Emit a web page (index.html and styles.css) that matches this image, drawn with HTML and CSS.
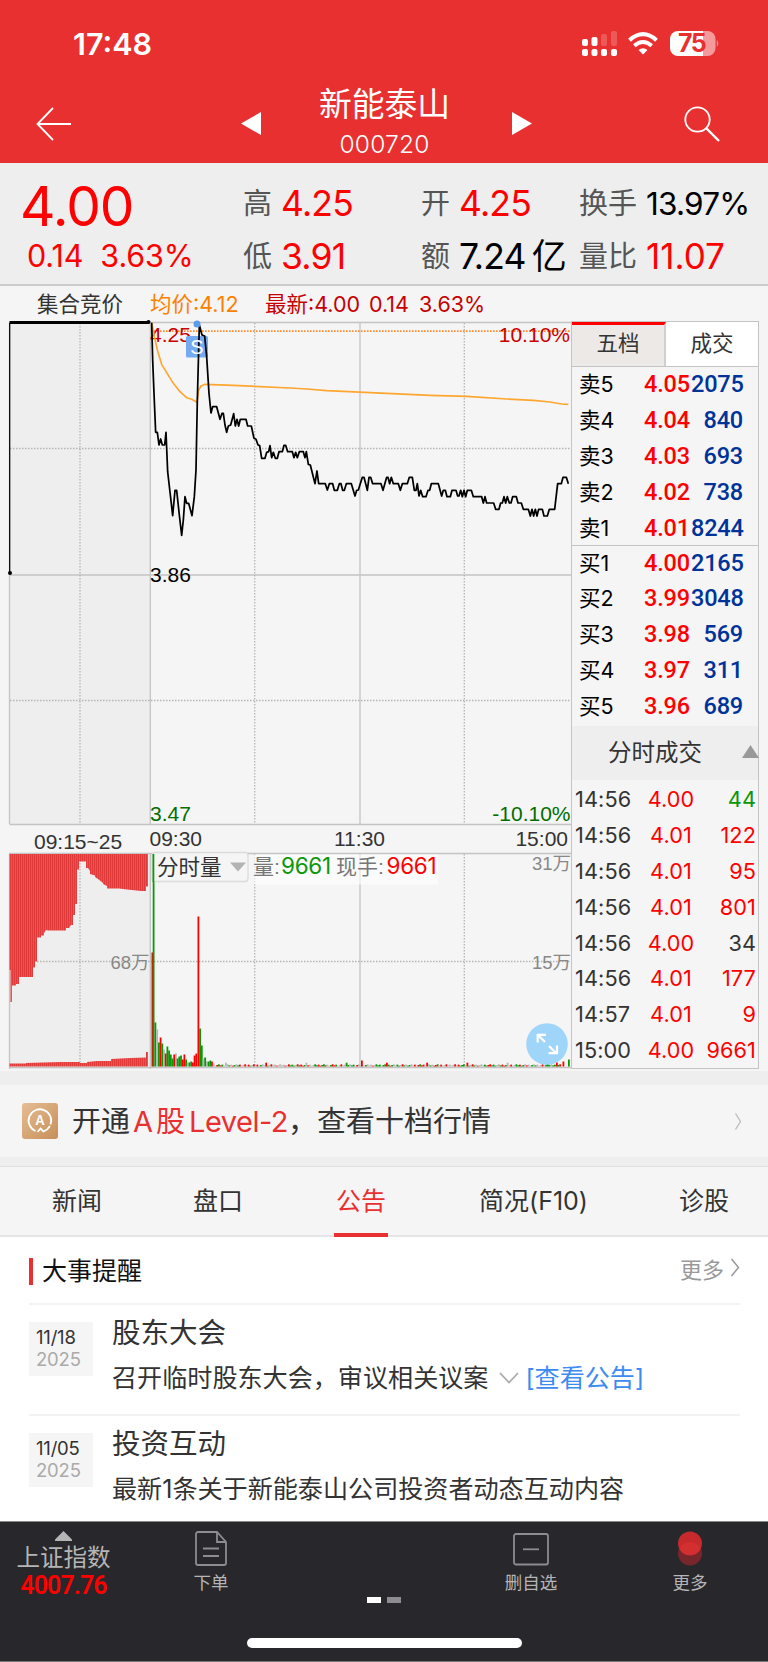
FILE: index.html
```html
<!DOCTYPE html>
<html lang="zh-CN">
<head>
    <meta charset="UTF-8">
    <meta name="viewport" content="width=device-width, initial-scale=1.0">
    <title>新能泰山 000720</title>
    <link rel="stylesheet" href="styles.css">
</head>
<body>

<header>
    <div class="status-bar">
        <span class="clock">17:48</span>
        <svg class="status-icons" width="138" height="40" viewBox="0 -6 138 40">
            <g fill="#fff">
                <rect x="2" y="19" width="6" height="7" rx="2"/>
                <rect x="11.500" y="19" width="6" height="7" rx="2"/>
                <rect x="21" y="19" width="6" height="7" rx="2"/>
                <rect x="31" y="19" width="6" height="7" rx="2"/>
                <rect x="2" y="9" width="6" height="7" rx="2"/>
                <rect x="11.500" y="7" width="6" height="9" rx="2"/>
                <rect x="21" y="4" width="6" height="12" rx="2" opacity=".2"/>
                <rect x="31" y="1" width="6" height="15" rx="2" opacity=".2"/>
                <path d="M63 24.500l-4.500-4.500q4.500-3.500 9 0z"/>
            </g>
            <path d="M49.500 10.200q13.500-12 27 0M54.300 15.700q8.700-7.400 17.400 0" fill="none" stroke="#fff" stroke-width="4"/>
            <path d="M98 1h6v25h-6a8 8 0 0 1-8-8V9a8 8 0 0 1 8-8z" fill="#fff"/>
            <rect x="103" y="1" width="20.500" height="25" fill="#fff"/>
            <path d="M123.500 1h4a8 8 0 0 1 8 8v9a8 8 0 0 1-8 8h-4z" fill="#f59a9a"/>
            <path d="M136.800 10q3 3.500 0 7z" fill="#f59a9a"/>
            <text class="battery" x="98" y="22">75</text>
        </svg>
    </div>
    <div class="title-bar">
        <svg class="back" width="36" height="34" viewBox="0 0 36 34"><path d="M17 1L1.500 17 17 33M1.500 17H35" fill="none" stroke="#fff" stroke-width="1.800"/></svg>
        <svg class="prev" width="20" height="23" viewBox="0 0 20 23"><path d="M0 11.500L20 0v23z" fill="#fff"/></svg>
        <div class="stock-name">
            <h1>新能泰山</h1>
            <p>000720</p>
        </div>
        <svg class="next" width="20" height="23" viewBox="0 0 20 23"><path d="M20 11.500L0 0v23z" fill="#fff"/></svg>
        <svg class="search" width="36" height="36" viewBox="0 0 36 36"><circle cx="13.500" cy="13.500" r="12.200" fill="none" stroke="#fff" stroke-width="1.800"/><path d="M22 22l13 13" stroke="#fff" stroke-width="2.400"/></svg>
    </div>
</header>

<section class="quote">
    <div class="price-now">
        <div class="price">4.00</div>
        <div class="change"><span>0.14</span><span>3.63%</span></div>
    </div>
    <dl class="high-low">
        <dt>高</dt><dd class="up">4.25</dd>
        <dt>低</dt><dd class="up">3.91</dd>
    </dl>
    <dl class="open-amount">
        <dt>开</dt><dd class="up">4.25</dd>
        <dt>额</dt><dd>7.24<i>亿</i></dd>
    </dl>
    <dl class="turnover">
        <dt>换手</dt><dd class="small">13.97%</dd>
        <dt>量比</dt><dd class="up mid">11.07</dd>
    </dl>
</section>

<div class="legend">
    <span class="auction">集合竞价</span>
    <span class="avg">均价:4.12</span>
    <span class="last">最新:4.00</span>
    <span class="last diff">0.14</span>
    <span class="last">3.63%</span>
</div>

<section class="market">
    <svg class="chart" id="chart" width="571" height="748" viewBox="0 321 571 748">
        <defs>
            <pattern id="stripes" width="2" height="10" patternUnits="userSpaceOnUse">
                <rect width="2" height="10" fill="#f25050"/>
                <rect width="1" height="10" fill="#e03a3a"/>
            </pattern>
        </defs>
        <!-- 集合竞价背景 -->
        <rect x="9.500" y="322.500" width="140.500" height="501.500" fill="#eee"/>
        <rect x="9.500" y="853.500" width="140.500" height="215" fill="#eee"/>
        <!-- 网格 -->
        <g class="grid">
            <path d="M9.500 322.500H571M9.500 575H571M9.500 824.500H571M9.500 853.500H571M9.500 1067.500H571"/>
            <path d="M9.500 322V824M150.300 322V824M360 322V824M9.500 853V1069M150.300 853V1069M360 853V1067"/>
        </g>
        <g class="dotted">
            <path d="M10 448.500H571M10 700.500H571M10 961.500H571"/>
            <path d="M80 323V824M254.700 323V824M464.300 323V824M80 854V1067M254.700 854V1067M464.300 854V1067"/>
        </g>
        <path class="limit" d="M151 331.200H571"/>
        <text x="150" y="342" class="red">4.25</text>
        <text x="570" y="342" class="red" text-anchor="end">10.10%</text>

        <path d="M9.500 322.500H148.500" stroke="#000" stroke-width="3"/>
        <path d="M9.700 323V573" stroke="#000" stroke-width="1.200"/>
        <circle cx="148.500" cy="322" r="2"/>
        <circle cx="10" cy="573" r="2"/>

        <rect x="186" y="336" width="22" height="21.500" rx="1.500" fill="#74abf0"/>
        <!-- 均价线和分时线 -->
        <g transform="translate(0 310) scale(.33333)" fill="none" stroke-linejoin="round">
            <path d="M455 38L463 80 472 120 485 163 500 188 520 220 540 245 560 263 575 268 591 277 596 240 603 228 615 223 700 226 870 234 920 237 980 242 1160 250 1290 256 1400 259 1520 267 1600 271 1650 276 1685 282 1705 283" stroke="#ffa630" stroke-width="5"/>
            <path d="M455 38L458 150 462 250 467 367H472L477 405 482 387 487 405H494L498 367 503 485 511 555 518 617 525 541H530L538 615 545 676 550 630 555 560 560 580H566L576 617 583 560 588 480 592 270 598 45 606 75 614 78 620 140 627 250 633 309 638 290H650L660 328 666 310H670L675 345 680 367 685 348 692 345 701 311 706 348 711 328 716 348 721 328H738L743 348H754L762 385 768 388 774 405 779 407 785 445H795L800 427 806 425 810 407 815 443 820 427 826 445H832L837 425H847L852 406H857L863 425H877L882 443 887 427 892 443 898 425H910L915 443 919 425 925 463 931 465 945 521 951 483 956 521H976L982 540 988 521H998L1003 541H1012L1018 521H1023L1028 541H1033L1039 521H1054L1065 558 1070 541 1075 540 1087 502H1092L1102 541 1107 502H1112L1118 521H1143L1149 541 1160 502H1164L1169 521 1174 502 1180 521H1195L1201 541 1207 521H1222L1228 502H1237L1243 541H1248L1252 521 1257 558 1262 541 1268 560H1278L1284 541H1289L1294 521H1315L1325 558 1330 541H1336L1341 560H1351L1356 541H1368L1373 558H1377L1382 541 1387 560 1392 541 1397 560 1402 541H1414L1420 560H1445L1450 579 1455 560 1460 579H1481L1487 598H1497L1502 579H1507L1512 560 1517 579 1522 560 1528 579H1533L1538 560H1549L1554 579H1564L1570 598H1585L1591 618 1596 598 1601 618 1606 598 1611 618 1616 598H1627L1632 618H1642L1648 598H1664L1673 521H1684L1689 502H1699L1705 521" stroke="#000" stroke-width="5.200"/>
        </g>
        <circle cx="197" cy="324" r="3.500" fill="#5a9bea"/>
        <text x="197" y="353.500" class="mark" text-anchor="middle">S</text>

        <text x="150" y="581.500">3.86</text>
        <text x="150" y="821" class="green">3.47</text>
        <text x="570.500" y="821" class="green" text-anchor="end">-10.10%</text>
        <text x="34" y="848.500" class="time">09:15~25</text>
        <text x="149.500" y="846" class="time">09:30</text>
        <text x="359.500" y="846" class="time" text-anchor="middle">11:30</text>
        <text x="568" y="846" class="time" text-anchor="end">15:00</text>

        <!-- 竞价量 -->
        <path fill="url(#stripes)" d="M9.500 854H148V886.500H146V891H141L127 889.500 119 888.500H107V886L103 884V883L98 879 95 877V875.500L90 874V871L88 868H86V861.500H79V869.500H77V904H75V915H73V925H71L69 928H66V930.500H48L46 930 44 933V935.500H41V937.500H37V961.500H35V967.500H33V977H19V984H16V985.500H12V1002H10.500V970H9.500z"/>
        <path fill="url(#stripes)" d="M9.500 1066.500V1063.500H26V1063L60 1062H80V1063H87V1062L97 1061H111V1059L130 1058 146 1057.500V1052H148V1066.500z"/>
        <g id="volume"></g>

        <text x="571" y="870" class="unit" text-anchor="end">31万</text>
        <text x="149.500" y="969" class="unit" text-anchor="end">68万</text>
        <text x="571" y="969" class="unit" text-anchor="end">15万</text>

        <rect x="152" y="852.500" width="96" height="29" rx="3" fill="#f5f5f5" stroke="#dcdcdc" stroke-width="1.300"/>
        <rect x="152.500" y="854" width="1.800" height="28" fill="#0a970a"/>
        <text x="157" y="875" class="index">分时量</text>
        <path d="M230 862.500h16l-8 9z" fill="#b3b3b3"/>
        <rect x="254" y="854.500" width="184" height="30" fill="#fff" opacity=".6"/>
        <text x="253" y="873.500" class="label">量:</text>
        <text x="281" y="873.500" class="num" fill="#0a970a">9661</text>
        <text x="336" y="873.500" class="label">现手:</text>
        <text x="386.500" y="873.500" class="num" fill="#f00">9661</text>

        <circle cx="547" cy="1044" r="20.800" fill="#a0d5fa"/>
        <path d="M545 1042l-7-7M537.700 1042.500V1034.800H546M549 1046l7 7M557 1045.500V1053.200H548.500" fill="none" stroke="#fff" stroke-width="2.200"/>
    </svg>

    <aside class="book">
        <div class="book-tabs">
            <span class="active">五档</span>
            <span>成交</span>
        </div>
        <ul class="orders sell">
            <li><span>卖5</span><b>4.05</b><em>2075</em></li>
            <li><span>卖4</span><b>4.04</b><em>840</em></li>
            <li><span>卖3</span><b>4.03</b><em>693</em></li>
            <li><span>卖2</span><b>4.02</b><em>738</em></li>
            <li><span>卖1</span><b>4.01</b><em>8244</em></li>
        </ul>
        <ul class="orders">
            <li><span>买1</span><b>4.00</b><em>2165</em></li>
            <li><span>买2</span><b>3.99</b><em>3048</em></li>
            <li><span>买3</span><b>3.98</b><em>569</em></li>
            <li><span>买4</span><b>3.97</b><em>311</em></li>
            <li><span>买5</span><b>3.96</b><em>689</em></li>
        </ul>
        <div class="trades-title">
            <span>分时成交</span>
            <svg width="17" height="13" viewBox="0 0 17 13"><path d="M0 13L8.500 0 17 13z" fill="#999"/></svg>
        </div>
        <ul class="trades">
            <li><span>14:56</span><b>4.00</b><em class="down">44</em></li>
            <li><span>14:56</span><b>4.01</b><em>122</em></li>
            <li><span>14:56</span><b>4.01</b><em>95</em></li>
            <li><span>14:56</span><b>4.01</b><em>801</em></li>
            <li><span>14:56</span><b>4.00</b><em class="flat">34</em></li>
            <li><span>14:56</span><b>4.01</b><em>177</em></li>
            <li><span>14:57</span><b>4.01</b><em>9</em></li>
            <li><span>15:00</span><b>4.00</b><em>9661</em></li>
        </ul>
    </aside>
</section>

<a class="level2">
    <svg width="36" height="36" viewBox="0 0 36 36">
        <defs><linearGradient id="gold" x1="0" y1="0" x2="1" y2="1"><stop offset="0" stop-color="#e6bd93"/><stop offset="1" stop-color="#c68f59"/></linearGradient></defs>
        <rect width="36" height="36" rx="3" fill="url(#gold)"/>
        <path d="M13.500 28A11.300 11.300 0 1 1 28.500 21.500M28 23q-2.500 4-6.500 5.500l-3-3-3 3.500" fill="none" stroke="#fff" stroke-width="1.800"/>
        <text x="18" y="22" text-anchor="middle">A</text>
    </svg>
    <p>开通<strong class="a">A</strong><strong>股</strong><strong class="lv">Level-2</strong>，查看十档行情</p>
    <svg class="arrow" width="8" height="17" viewBox="0 0 8 17"><path d="M1.500 .5l5 8-5 8" fill="none" stroke="#bbb" stroke-width="1.300"/></svg>
</a>

<nav class="tabs">
    <a>新闻</a>
    <a>盘口</a>
    <a class="active">公告</a>
    <a>简况(F10)</a>
    <a>诊股</a>
</nav>

<section class="events">
    <div class="events-head">
        <h2>大事提醒</h2>
        <a class="more">更多<svg width="10" height="19" viewBox="0 0 10 19"><path d="M1.500 1l7 8.500-7 8.500" fill="none" stroke="#999" stroke-width="1.500"/></svg></a>
    </div>
    <article class="event">
        <div class="date">11/18<span>2025</span></div>
        <div class="event-text">
            <h3>股东大会</h3>
            <p>召开临时股东大会，审议相关议案<svg width="20" height="12" viewBox="0 0 20 12"><path d="M1 1l9 9.500L19 1" fill="none" stroke="#aaa" stroke-width="1.800"/></svg><a>[查看公告]</a></p>
        </div>
    </article>
    <article class="event">
        <div class="date">11/05<span>2025</span></div>
        <div class="event-text">
            <h3>投资互动</h3>
            <p>最新1条关于新能泰山公司投资者动态互动内容</p>
        </div>
    </article>
</section>

<footer>
    <div class="toolbar">
        <div class="index-box">
            <svg width="17" height="10" viewBox="0 0 17 10"><path d="M8.500 0L17 8.500V10H0V8.500z" fill="#b5b5b5"/></svg>
            <span>上证指数</span>
            <b>4007.76</b>
        </div>
        <div class="tool order">
            <svg width="32" height="35" viewBox="0 0 32 35"><path d="M22 1H3a2 2 0 0 0-2 2v29a2 2 0 0 0 2 2h26a2 2 0 0 0 2-2V11zM22 1v10h9M8 17.500h16M8 25h16" fill="none" stroke="#8d8d90" stroke-width="1.800"/></svg>
            下单
        </div>
        <div class="tool remove">
            <svg width="36" height="35" viewBox="0 0 36 35"><rect x="1" y="3" width="34" height="30.500" rx="2" fill="none" stroke="#8d8d90" stroke-width="1.800"/><path d="M10 18.300h16" stroke="#8d8d90" stroke-width="1.800"/></svg>
            删自选
        </div>
        <div class="tool more-tool">
            <svg width="26" height="35" viewBox="0 0 26 35"><circle cx="13" cy="22.500" r="12" fill="#77262b"/><circle cx="13" cy="12.500" r="12" fill="#c62a2d"/><path d="M2.300 17.500a12 12 0 0 1 21.400 0A12 12 0 0 1 2.300 17.500z" fill="#d32e30"/></svg>
            更多
        </div>
    </div>
    <div class="pager"><i class="on"></i><i></i></div>
    <div class="home-bar"></div>
</footer>

<script>
    // 成交量柱: [x, 高度, 颜色]
    const colors = { r: '#f00', g: '#0a970a', w: '#b5b5b5' };
    const bars = [
        [151.5, 114, 'r'], [152.700, 212, 'g'], [154.500, 44, 'g'], [156.300, 37, 'w'], [158, 24, 'g'],
        [159.700, 29, 'r'], [161.400, 23, 'g'], [163.100, 17, 'w'], [164.800, 13, 'r'], [166.500, 20, 'g'],
        [168.200, 16, 'g'], [169.900, 12, 'g'], [171.600, 8, 'g'], [173.300, 12, 'r'], [175, 13, 'w'],
        [176.700, 8, 'g'], [178.400, 10, 'g'], [180.100, 11, 'g'], [181.800, 7, 'r'], [183.500, 12, 'r'],
        [185.200, 7, 'g'], [186.900, 4, 'w'], [188.600, 4, 'g'], [190.300, 5, 'g'], [192, 4, 'r'],
        [193.700, 11, 'r'], [195.400, 13, 'r'], [197.500, 150, 'r'], [199.200, 38, 'g'], [200.900, 21, 'g'],
        [202.600, 8, 'w'], [204.300, 9, 'g'], [206, 5, 'w'], [207.700, 5, 'g'], [209.400, 6, 'g'],
        [211.100, 5, 'r'], [212.800, 3, 'w']
    ];
    const tail = 'wwggrwrggrrwrwgrgrgwwwgwwgwggwrrwrgrwgwgwwrwrgwrwgwwwgrwgw';
    for (let i = 0; i < 198; i++) {
        let h = 0.8 + (i * 7 % 5) * 0.35;
        if (i % 23 === 6) h = 3.8;
        bars.push([214.500 + i * 1.750, h, tail[(i * 3 + i % 7) % tail.length]]);
    }
    bars.push([361, 6, 'r'], [556, 4, 'r'], [562.500, 5, 'r'], [568, 7, 'g']);

    const group = document.getElementById('volume');
    bars.forEach(([x, h, c]) => {
        const rect = document.createElementNS('http://www.w3.org/2000/svg', 'rect');
        rect.setAttribute('x', x);
        rect.setAttribute('y', 1066.5 - h);
        rect.setAttribute('width', 1.8);
        rect.setAttribute('height', h);
        rect.setAttribute('fill', colors[c]);
        group.appendChild(rect);
    });
</script>
</body>
</html>
```
FILE: styles.css
```css
* {
    box-sizing: border-box;
    margin: 0;
    padding: 0;
}
body {
    width: 768px;
    height: 1662px;
    overflow: hidden;
    font-family: Inter, "Noto Sans CJK SC", sans-serif;
    background-color: #eee;
    color: #333;
}
ul {
    list-style: none;
}
i, em {
    font-style: normal;
}
svg {
    display: block;
    flex: none;
    overflow: visible;
}
header {
    height: 163px;
    background-color: #e93030;
    color: #fff;
}
.status-bar {
    display: flex;
    justify-content: space-between;
    height: 86px;
    padding: 24px 50px 0 73px;
}
.clock {
    font-size: 30.5px;
    font-weight: 600;
    line-height: 40px;
}
.battery {
    font-size: 25px;
    font-weight: 700;
    letter-spacing: -1.5px;
    fill: #e93030;
}
.title-bar {
    display: flex;
    align-items: flex-start;
    height: 77px;
    padding: 0 48px 0 36px;
}
.back {
    margin-top: 21px;
}
.prev {
    margin: 26px 0 0 169px;
}
.stock-name {
    width: 247px;
    margin: -1px 4px 0 0;
    text-align: center;
}
.stock-name h1 {
    font-size: 32.8px;
    font-weight: 400;
    line-height: 38px;
}
.stock-name p {
    font-size: 24.5px;
    font-weight: 300;
    line-height: 30px;
    margin-top: 6px;
    letter-spacing: 0.2px;
}
.next {
    margin-top: 26px;
}
.search {
    margin: 20px 0 0 auto;
}
.quote {
    display: flex;
    height: 123px;
    background-color: #eee;
    border-bottom: 2px solid #ccc;
}
.price-now {
    width: 243px;
    color: #f00;
}
.price {
    font-size: 55px;
    line-height: 60px;
    margin: 13px 0 0 20px;
    letter-spacing: -1px;
}
.change {
    display: flex;
    gap: 17px;
    padding-left: 27px;
    font-size: 30.5px;
    line-height: 39px;
    letter-spacing: -0.1px;
}
.quote dl {
    display: grid;
    grid-template-rows: 53px 53px;
    align-content: start;
    padding-top: 14px;
    line-height: 53px;
}
.quote dt {
    font-size: 29px;
    color: #555;
}
.quote dd {
    font-size: 35.5px;
    letter-spacing: -0.8px;
    color: #000;
    white-space: nowrap;
}
.quote .up {
    color: #f00;
}
.quote .small {
    font-size: 31.5px;
}
.quote .mid {
    font-size: 35px;
    letter-spacing: 0;
}
.quote dd i {
    font-size: 35px;
    margin-left: 6px;
}
.high-low {
    width: 178px;
    grid-template-columns: 38px auto;
}
.open-amount {
    width: 158px;
    grid-template-columns: 38px auto;
}
.turnover {
    grid-template-columns: 67px auto;
}
.legend {
    display: flex;
    height: 35px;
    padding-left: 37px;
    font-size: 21.5px;
    line-height: 37px;
    background-color: #f5f5f5;
}
.auction {
    width: 113px;
}
.avg {
    width: 115px;
    color: #ff8000;
}
.last {
    width: 104px;
    color: #c80000;
}
.diff {
    width: 50px;
}
.market {
    display: flex;
    height: 750px;
    background-color: #f5f5f5;
}
.grid path {
    stroke: #c4c4c4;
    stroke-width: 1.3;
}
.dotted path {
    stroke: #b5b5b5;
    stroke-width: 1.3;
    stroke-dasharray: 1.5 1.5;
}
.limit {
    stroke: #ff8c32;
    stroke-width: 1.8;
    stroke-dasharray: 1.6 1.4;
}
.chart text {
    font-family: "Liberation Sans", "Noto Sans CJK SC", sans-serif;
    font-size: 21px;
}
.chart .red {
    fill: #c80000;
}
.chart .green {
    fill: #006e00;
}
.chart .time {
    fill: #333;
}
.chart .unit {
    font-size: 18.5px;
    fill: #888;
}
.chart .mark {
    font-size: 20px;
    fill: #fff;
}
.chart .index {
    font-size: 21.5px;
    fill: #333;
}
.chart .label {
    font-size: 21px;
    fill: #777;
}
.chart .num {
    font-family: Inter, sans-serif;
    font-size: 22.5px;
    letter-spacing: -0.3px;
}
.book {
    width: 188px;
    height: 748px;
    border: 1px solid #c4c4c4;
}
.book-tabs {
    display: flex;
    height: 45px;
    border-bottom: 1px solid #c4c4c4;
    font-size: 21.5px;
    line-height: 43px;
    text-align: center;
}
.book-tabs span {
    flex: 1;
    background-color: #fff;
}
.book-tabs .active {
    line-height: 37px;
    background-color: #ede9e7;
    border-top: 3px solid #f00;
    border-right: 2px solid #d0d0d0;
}
.orders {
    height: 179.5px;
}
.sell {
    height: 178.5px;
    border-bottom: 1px solid #c4c4c4;
}
.orders li {
    display: grid;
    grid-template-columns: 65px 47px 59px;
    padding-left: 7px;
    height: 35.9px;
    line-height: 35.9px;
    font-size: 21.5px;
    color: #000;
}
.orders b, .orders em {
    font-family: Roboto, sans-serif;
    font-size: 23.5px;
    font-weight: 500;
    letter-spacing: -0.2px;
    color: #f00;
}
.orders em {
    width: 52px;
    color: #003399;
    text-align: right;
}
.trades-title {
    display: flex;
    justify-content: space-between;
    align-items: center;
    height: 54px;
    margin-top: 1px;
    padding-left: 36px;
    font-size: 23.5px;
    line-height: 53px;
    background-color: #eee;
}
.trades-title span {
    height: 54px;
}
.trades-title svg {
    margin: -4px -1px 0 0;
}
.trades {
    padding-top: 2px;
}
.trades li {
    display: grid;
    grid-template-columns: 64px 64px 53px;
    padding-left: 3px;
    height: 35.9px;
    line-height: 35.9px;
    font-size: 21.7px;
    letter-spacing: 0.1px;
}
.trades b {
    font-weight: 400;
    text-align: center;
    color: #f00;
}
.trades em {
    display: flex;
    justify-content: flex-end;
    color: #f00;
}
.trades .down {
    color: #0a970a;
}
.trades .flat {
    color: #333;
}
.level2 {
    display: flex;
    align-items: center;
    height: 72px;
    margin-top: 14px;
    padding: 0 26px 0 22px;
    background-color: #f5f5f5;
}
.level2 text {
    font-size: 13px;
    font-weight: 600;
    fill: #fff;
}
.level2 p {
    margin: -4px 0 0 14px;
    font-size: 29px;
}
.level2 strong {
    font-weight: 400;
    color: #e93030;
}
.level2 .a {
    margin: 0 3px;
}
.level2 .lv {
    margin-left: 4px;
    letter-spacing: -0.5px;
}
.arrow {
    margin-left: auto;
}
.tabs {
    display: flex;
    height: 71px;
    margin-top: 9px;
    padding: 0 39px 0 52px;
    justify-content: space-between;
    background-color: #f5f5f5;
    border-top: 1px solid #e0e0e0;
    border-bottom: 2px solid #e5e5e5;
    font-size: 25px;
    line-height: 69px;
}
.tabs .active {
    height: 70px;
    padding: 0 2px;
    color: #e93030;
    border-bottom: 4px solid #e93030;
}
.events {
    height: 284px;
    padding: 0 28px 0 29px;
    background-color: #fff;
}
.events-head {
    display: flex;
    justify-content: space-between;
    height: 66px;
    padding-top: 21px;
}
.events-head h2 {
    height: 27px;
    padding-left: 9px;
    border-left: 4px solid #e93030;
    font-size: 25px;
    font-weight: 400;
    line-height: 26px;
    color: #111;
}
.more {
    display: flex;
    align-items: center;
    gap: 6px;
    height: 19px;
    font-size: 22px;
    color: #999;
}
.event {
    display: flex;
    height: 111px;
    border-top: 2px solid #f3f3f3;
}
.date {
    width: 64px;
    height: 54px;
    margin-top: 17px;
    padding: 5px 0 0 7px;
    background-color: #f5f5f5;
    font-size: 18.5px;
    line-height: 21.5px;
    letter-spacing: -0.2px;
}
.date span {
    display: block;
    color: #aaa;
}
.event-text {
    margin-left: 19px;
}
.event h3 {
    margin-top: 7px;
    font-size: 28.5px;
    font-weight: 400;
    line-height: 42px;
}
.event p {
    display: flex;
    align-items: center;
    margin-top: 5px;
    font-size: 25.1px;
    line-height: 38px;
}
.event p svg {
    margin: 0 6px 0 11px;
}
.event p a {
    color: #3c8cf0;
}
footer {
    height: 141px;
    background-color: #27272c;
    border-top: 1px solid #888;
    border-bottom: 1px solid #777;
}
.toolbar {
    display: flex;
    height: 75px;
    padding-top: 9px;
    color: #b5b5b5;
}
.index-box {
    display: flex;
    flex-direction: column;
    align-items: center;
    width: 127px;
    font-size: 23.5px;
    line-height: 34px;
}
.index-box b {
    font-family: Roboto, sans-serif;
    font-size: 25px;
    font-weight: 600;
    line-height: 22px;
    letter-spacing: -0.9px;
    color: #f00;
}
.tool {
    display: flex;
    flex-direction: column;
    align-items: center;
    width: 60px;
    font-size: 17.5px;
    line-height: 34px;
}
.order {
    margin-left: 54px;
}
.remove {
    margin-left: 260px;
}
.more-tool {
    margin-left: 99px;
}
.pager {
    display: flex;
    justify-content: center;
    gap: 6px;
    height: 6px;
}
.pager i {
    width: 14px;
    background-color: #8d8d90;
}
.pager .on {
    background-color: #fff;
}
.home-bar {
    width: 275px;
    height: 10px;
    margin: 35px auto 0;
    border-radius: 5px;
    background-color: #fff;
}
```
